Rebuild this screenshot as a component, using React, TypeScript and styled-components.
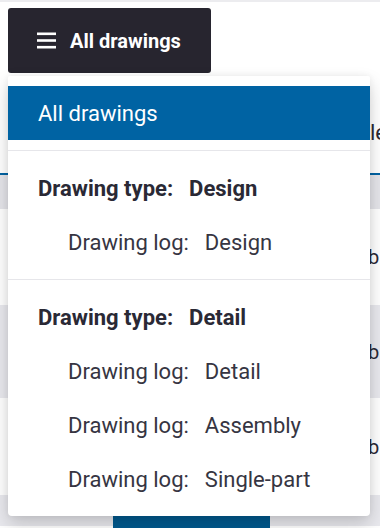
import React from 'react'
import styled, { createGlobalStyle } from 'styled-components'

const GlobalStyle = createGlobalStyle`
  html, body {
    margin: 0;
    padding: 0;
    background: #fff;
  }
  body {
    font-family: Roboto, 'Noto Sans', Arial, sans-serif;
    color: #2a2935;
  }
`

const Page = styled.div`
  width: 380px;
  height: 528px;
  overflow: hidden;
  border-top: 2px solid #ececef;
  box-sizing: border-box;
  background: #fff;
`

const Toolbar = styled.div`
  padding: 6px 8px 0;
  display: flex;
`

const MenuWrap = styled.div`
  position: relative;
`

const MenuButton = styled.button`
  display: flex;
  align-items: center;
  gap: 14px;
  height: 65px;
  padding: 0 30px 0 29px;
  border: none;
  border-radius: 3px;
  background: #27252f;
  color: #fff;
  font-family: Roboto, sans-serif;
  font-size: 20px;
  font-weight: 700;
  cursor: pointer;
`

const Dropdown = styled.div`
  position: absolute;
  z-index: 10;
  top: calc(100% + 3px);
  left: 0;
  width: 362px;
  background: #fff;
  border-radius: 2px 2px 4px 4px;
  box-shadow: 0 8px 18px rgba(0, 0, 0, 0.18), 0 0 6px rgba(0, 0, 0, 0.06);
`

const Section = styled.div<{ $divided?: boolean }>`
  padding: 10px 0;
  border-top: ${(p) => (p.$divided ? '1px solid #e6e6ea' : 'none')};
`

const Item = styled.div<{ $active?: boolean; $indent?: boolean; $bold?: boolean }>`
  display: flex;
  align-items: center;
  gap: 16px;
  height: 54px;
  padding-left: ${(p) => (p.$indent ? '60px' : '30px')};
  font-size: 22px;
  font-weight: ${(p) => (p.$bold ? 700 : 400)};
  background: ${(p) => (p.$active ? '#0063a3' : 'transparent')};
  color: ${(p) => (p.$active ? '#fff' : p.$bold ? '#2a2935' : '#363542')};
  white-space: nowrap;
`

const Heading = styled.div`
  display: grid;
  grid-template-columns: 362px 1fr;
  height: 102px;
  align-items: center;
  padding-top: 18px;
  box-sizing: border-box;
  border-bottom: 2px solid #0063a3;
`

const HeadingText = styled.div`
  font-size: 22px;
  color: #2a2935;
  padding-left: 8px;
  white-space: nowrap;
`

const HeaderRow = styled.div`
  height: 34px;
  background: #e5e5ea;
`

const Row = styled.div<{ $shade?: boolean; $height: number }>`
  display: grid;
  grid-template-columns: 362px 1fr;
  align-items: center;
  height: ${(p) => p.$height}px;
  background: ${(p) => (p.$shade ? '#e9e9ee' : '#fff')};
`

const Cell = styled.div`
  font-size: 20px;
  color: #2a2935;
  padding-left: 6px;
  white-space: nowrap;
`

const Footer = styled.div`
  display: flex;
  justify-content: center;
  padding-top: 19px;
  padding-left: 3px;
  background: #e9e9ee;
  height: 31px;
  box-sizing: border-box;
`

const PrimaryButton = styled.div`
  width: 157px;
  height: 40px;
  background: #005a8f;
  border-radius: 2px;
`

const BarsIcon = () => (
  <svg width="19" height="17" viewBox="0 0 19 17" fill="#fff">
    <rect x="0" y="0.5" width="19" height="2.6" />
    <rect x="0" y="7.2" width="19" height="2.6" />
    <rect x="0" y="13.9" width="19" height="2.6" />
  </svg>
)

const logs = ['Detail', 'Assembly', 'Single-part']

const App = () => {
  return (
    <>
      <GlobalStyle />
      <Page>
        <Toolbar>
          <MenuWrap>
            <MenuButton>
              <BarsIcon />
              All drawings
            </MenuButton>
            <Dropdown>
              <Section>
                <Item $active>All drawings</Item>
              </Section>
              <Section $divided>
                <Item $bold>
                  <span>Drawing type:</span>
                  <span>Design</span>
                </Item>
                <Item $indent>
                  <span>Drawing log:</span>
                  <span>Design</span>
                </Item>
              </Section>
              <Section $divided>
                <Item $bold>
                  <span>Drawing type:</span>
                  <span>Detail</span>
                </Item>
                {logs.map((log) => (
                  <Item $indent key={log}>
                    <span>Drawing log:</span>
                    <span>{log}</span>
                  </Item>
                ))}
              </Section>
            </Dropdown>
          </MenuWrap>
        </Toolbar>
        <Heading>
          <div />
          <HeadingText>le</HeadingText>
        </Heading>
        <HeaderRow />
        <Row $height={96}>
          <div />
          <Cell>b</Cell>
        </Row>
        <Row $shade $height={93}>
          <div />
          <Cell>b</Cell>
        </Row>
        <Row $height={97}>
          <div />
          <Cell>b</Cell>
        </Row>
        <Footer>
          <PrimaryButton />
        </Footer>
      </Page>
    </>
  )
}

export default App
